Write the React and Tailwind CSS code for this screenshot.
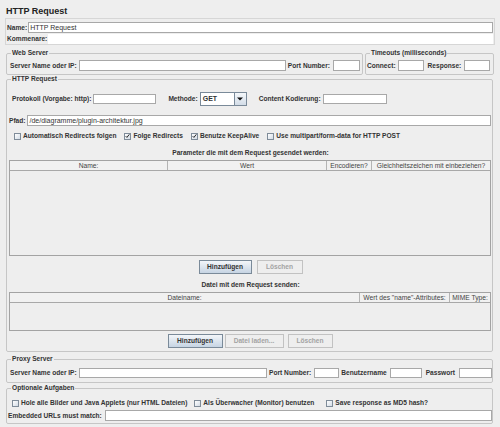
import React from "react";

const L = ({ children, className = "" }) => (
  <span className={"whitespace-nowrap font-bold text-[6.6px] leading-[8px] text-[#333333] " + className}>{children}</span>
);

const Field = ({ className = "", h = "h-[11px]", children }) => (
  <div className={"bg-white border border-[#a8a8a8] " + h + " " + className}>
    {children}
  </div>
);

const Check = ({ checked, className = "" }) => (
  <span className={"flex w-[7px] h-[7px] shrink-0 items-center justify-center border border-[#7f8c99] bg-gradient-to-br from-white to-[#d3dce6] " + className}>
    {checked && (
      <svg width="6" height="6" viewBox="0 0 6 6">
        <path d="M0.8 3.2 L2.3 4.7 L5.2 1" fill="none" stroke="#111" strokeWidth="1.1" />
      </svg>
    )}
  </span>
);

const Btn = ({ children, w, disabled, className = "" }) => (
  <div
    className={
      "flex h-[14px] items-center justify-center border font-bold text-[6.6px] leading-[8px] whitespace-nowrap " +
      (disabled
        ? "border-[#c2c2c2] bg-[#eeeeee] text-[#a3a3a3] "
        : "border-[#7a8a99] bg-gradient-to-b from-[#f3f6f9] to-[#c6d4e3] text-[#333333] ") +
      w +
      " " +
      className
    }
  >
    {children}
  </div>
);

const Group = ({ title, className = "", children }) => (
  <fieldset className={"border border-[#c6c6c6] rounded-[2px] min-w-0 " + className}>
    <legend className="ml-[4px] px-[1px] font-bold text-[6.6px] leading-[8px] text-[#333333] whitespace-nowrap">{title}</legend>
    {children}
  </fieldset>
);

const HCell = ({ children, className = "" }) => (
  <div className={"flex items-center justify-center border-r border-[#b4b4b4] text-[6.7px] leading-[9px] text-[#444444] whitespace-nowrap overflow-hidden " + className}>
    {children}
  </div>
);

export default function App() {
  return (
    <div className="w-[500px] h-[427px] overflow-hidden bg-[#eeeeee] text-[#333333] font-['Liberation_Sans',Arial,sans-serif]">
      <div className="h-[18px] pl-[6px] pt-[6px] text-[9px] leading-[11px] font-bold text-[#222222]">HTTP Request</div>

      <div className="ml-[5px] w-[490px] h-[27px] border border-[#d6d6d6] flex flex-col pr-[1px]">
        <div className="mt-[3px] h-[11px] flex items-center">
          <L className="ml-[1px]">Name:</L>
          <Field className="ml-[1px] flex-1 flex items-center pl-[1px]">
            <span className="text-[7px] leading-[9px] text-[#333333]">HTTP Request</span>
          </Field>
        </div>
        <div className="mt-[1px] h-[10px] flex items-center">
          <L className="ml-[1px]">Kommenare:</L>
          <div className="ml-[1px] flex-1 h-[10px] bg-white" />
        </div>
      </div>

      <div className="flex mt-[4px] ml-[6px]">
        <Group title="Web Server" className="w-[357px]">
          <div className="h-[17px] flex items-center pl-[3px] pr-[2px]">
            <L>Server Name oder IP:</L>
            <Field className="ml-[2px] flex-1" />
            <L className="ml-[2px]">Port Number:</L>
            <Field className="ml-[3px] w-[27px]" />
          </div>
        </Group>
        <Group title="Timeouts (milliseconds)" className="ml-[2px] w-[129px]">
          <div className="h-[17px] flex items-center pl-[1px]">
            <L>Connect:</L>
            <Field className="ml-[2px] w-[26px]" />
            <L className="ml-[4px]">Response:</L>
            <Field className="ml-[3px] w-[26px]" />
          </div>
        </Group>
      </div>

      <Group title="HTTP Request" className="ml-[6px] w-[487px] pb-[3px]">
        <div className="flex flex-col">
          <div className="mt-[9px] h-[14px] flex items-center pl-[5px]">
            <L>Protokoll (Vorgabe: http):</L>
            <Field h="h-[10px]" className="ml-[2px] w-[63px]" />
            <L className="ml-[12px]">Methode:</L>
            <div className="ml-[2px] w-[47px] h-[14px] flex border border-[#7a8a99] bg-white">
              <span className="flex-1 pl-[2px] font-bold text-[7px] leading-[12px] text-[#333333]">GET</span>
              <span className="w-[12px] flex items-center justify-center border-l border-[#7a8a99] bg-gradient-to-b from-[#f5f8fb] to-[#d3dde8]">
                <svg width="6" height="4" viewBox="0 0 6 4">
                  <path d="M0 0.5 H6 L3 3.5 Z" fill="#111" />
                </svg>
              </span>
            </div>
            <L className="ml-[12px]">Content Kodierung:</L>
            <Field h="h-[10px]" className="ml-[2px] w-[64px]" />
          </div>

          <div className="mt-[9px] h-[11px] flex items-center pl-[2px] pr-[1px]">
            <L>Pfad:</L>
            <Field className="ml-[2px] flex-1 flex items-center pl-[1px]">
              <span className="text-[7px] leading-[9px] text-[#333333]">/de/diagramme/plugin-architektur.jpg</span>
            </Field>
          </div>

          <div className="mt-[5px] h-[10px] flex items-center pl-[7px]">
            <Check />
            <L className="ml-[2px]">Automatisch Redirects folgen</L>
            <Check checked className="ml-[8px]" />
            <L className="ml-[2px]">Folge Redirects</L>
            <Check checked className="ml-[8px]" />
            <L className="ml-[2px]">Benutze KeepAlive</L>
            <Check className="ml-[8px]" />
            <L className="ml-[2px]">Use multipart/form-data for HTTP POST</L>
          </div>

          <div className="mt-[7px] h-[10px] flex items-center justify-center pl-[2px]">
            <L>Parameter die mit dem Request gesendet werden:</L>
          </div>

          <div className="mt-[2px] ml-[2px] mr-[1px] h-[96px] border border-[#a3a3a3] bg-[#eeeeee] flex flex-col">
            <div className="h-[10px] flex border-b border-[#a8a8a8] bg-[#f1f1f1]">
              <HCell className="w-[158px]">Name:</HCell>
              <HCell className="w-[159px]">Wert</HCell>
              <HCell className="w-[45px]">Encodieren?</HCell>
              <HCell className="flex-1 border-r-0">Gleichheitszeichen mit einbeziehen?</HCell>
            </div>
          </div>

          <div className="mt-[4px] h-[14px] flex justify-center pl-[2px]">
            <Btn w="w-[53px]">Hinzufügen</Btn>
            <Btn w="w-[46px]" disabled className="ml-[5px]">Löschen</Btn>
          </div>

          <div className="mt-[6px] h-[10px] flex items-center justify-center pl-[2px]">
            <L>Datei mit dem Request senden:</L>
          </div>

          <div className="mt-[2px] ml-[2px] mr-[1px] h-[39px] border border-[#a3a3a3] bg-[#eeeeee] flex flex-col">
            <div className="h-[10px] flex border-b border-[#a8a8a8] bg-[#f1f1f1]">
              <HCell className="w-[350px]">Dateiname:</HCell>
              <HCell className="w-[90px]">Wert des "name"-Attributes:</HCell>
              <HCell className="flex-1 border-r-0">MIME Type:</HCell>
            </div>
          </div>

          <div className="mt-[3px] h-[14px] flex justify-center pl-[1px]">
            <Btn w="w-[55px]">Hinzufügen</Btn>
            <Btn w="w-[59px]" disabled className="ml-[2px]">Datei laden...</Btn>
            <Btn w="w-[45px]" disabled className="ml-[4px]">Löschen</Btn>
          </div>
        </div>
      </Group>

      <Group title="Proxy Server" className="mt-[3px] ml-[6px] w-[487px]">
        <div className="h-[19px] flex items-center pl-[3px]">
          <L>Server Name oder IP:</L>
          <Field h="h-[10px]" className="ml-[2px] flex-1" />
          <L className="ml-[2px]">Port Number:</L>
          <Field h="h-[10px]" className="ml-[3px] w-[25px]" />
          <L className="ml-[2px]">Benutzername</L>
          <Field h="h-[10px]" className="ml-[3px] w-[32px]" />
          <L className="ml-[4px]">Passwort</L>
          <Field h="h-[10px]" className="ml-[4px] w-[33px]" />
        </div>
      </Group>

      <Group title="Optionale Aufgaben" className="mt-[1px] ml-[6px] w-[487px] pb-[2px]">
        <div className="flex flex-col">
          <div className="mt-[6px] h-[10px] flex items-center pl-[5px]">
            <Check />
            <L className="ml-[2px]">Hole alle Bilder und Java Applets (nur HTML Dateien)</L>
            <Check className="ml-[7px]" />
            <L className="ml-[2px]">Als Überwacher (Monitor) benutzen</L>
            <Check className="ml-[12px]" />
            <L className="ml-[2px]">Save response as MD5 hash?</L>
          </div>
          <div className="mt-[2px] h-[11px] flex items-center pl-[1px]">
            <L>Embedded URLs must match:</L>
            <Field className="ml-[3px] flex-1" />
          </div>
        </div>
      </Group>
    </div>
  );
}
